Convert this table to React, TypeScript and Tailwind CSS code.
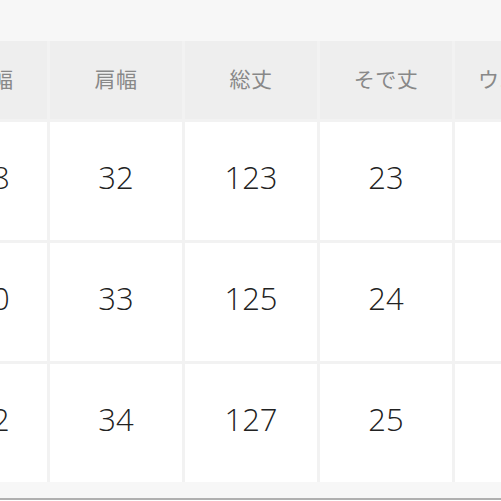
import React from 'react';

const headers = ['身幅', '肩幅', '総丈', 'そで丈', 'ウエスト'];
const rows = [
  ['48', '32', '123', '23', '70'],
  ['50', '33', '125', '24', '74'],
  ['52', '34', '127', '25', '78'],
];

const App = () => {
  return (
    <div
      className="w-[501px] h-[501px] overflow-hidden bg-white"
      style={{ fontFamily: '"Noto Sans CJK JP", "Noto Sans", sans-serif' }}
    >
      <div className="bg-[#f7f7f7] pt-[41px] pb-[16px] border-b-2 border-[#b0b0b0]">
        <div className="ml-[-85px] w-[700px] grid grid-cols-[132px_132px_132px_132px_132px] gap-[3px] bg-[#f2f2f2]">
          {headers.map((h, j) => (
            <div
              key={h}
              className={`h-[78px] bg-[#eeeeee] flex items-center justify-center pb-[2px] text-[21px] text-[#888888] tracking-wide ${j === 0 ? 'pl-[22px]' : ''}`}
            >
              {h}
            </div>
          ))}
          {rows.map((r, i) =>
            r.map((v, j) => (
              <div
                key={`${i}-${j}`}
                className={`h-[118px] bg-white flex items-center justify-center pb-[8px] text-[31px] font-light text-[#222222] ${j === 0 ? 'pl-[22px]' : ''}`}
                style={{ fontFamily: '"Open Sans", "Noto Sans", sans-serif' }}
              >
                {v}
              </div>
            )),
          )}
        </div>
      </div>
    </div>
  );
};

export default App;
